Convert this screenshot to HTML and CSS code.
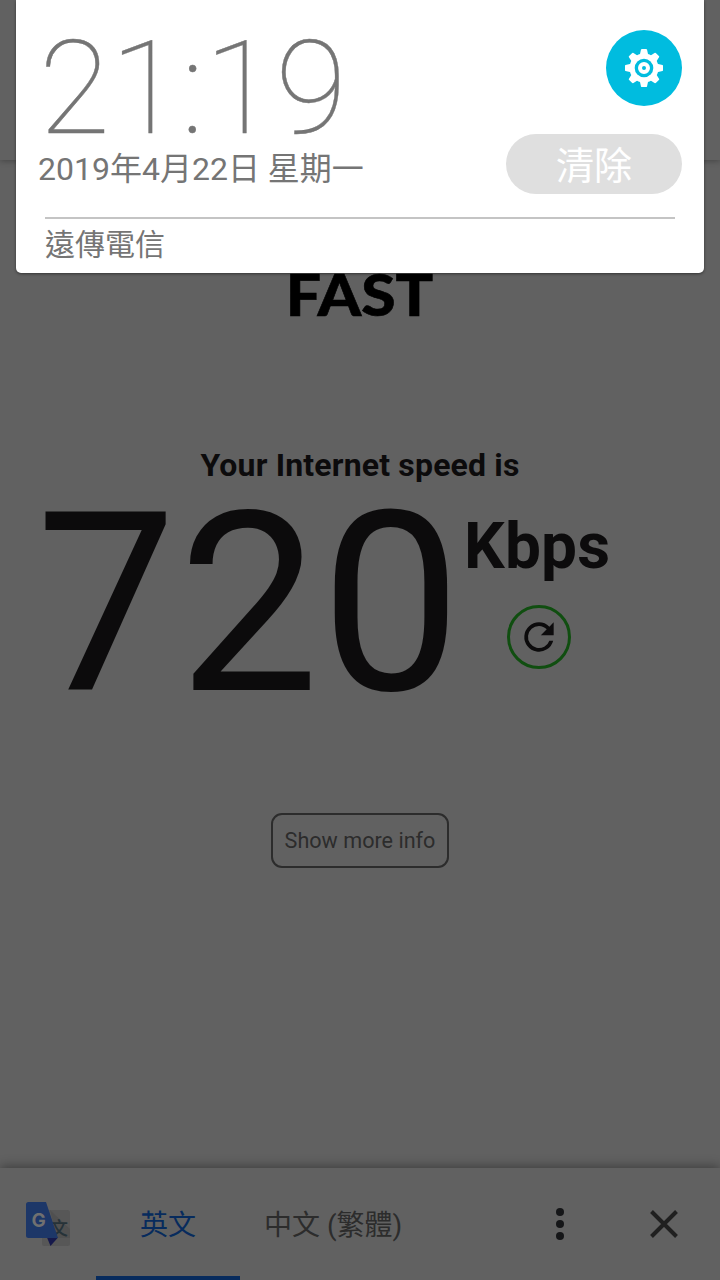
FILE: index.html
```html
<!DOCTYPE html>
<html lang="zh-Hant">
  <head>
    <meta charset="UTF-8" />
    <meta name="viewport" content="width=device-width, initial-scale=1.0" />
    <title>FAST</title>
    <link rel="stylesheet" href="styles.css">
  </head>
  <body>
    <div id="container">
      <header class="top-bar"></header>
      <main class="content">
        <h1 class="logo">FAST</h1>
        <p class="speed-title">Your Internet speed is</p>
        <div class="speed">
          <span class="speed-value">720</span>
          <div class="speed-side">
            <span class="speed-unit">Kbps</span>
            <button type="button" class="refresh-btn" aria-label="Refresh">
              <svg viewBox="0 0 24 24" width="44" height="44">
                <path d="M17.65 6.35A7.96 7.96 0 0 0 12 4a8 8 0 1 0 7.73 10h-2.08A6 6 0 1 1 12 6c1.66 0 3.14.69 4.22 1.78L13 11h7V4z" />
              </svg>
            </button>
          </div>
        </div>
        <button type="button" class="more-btn">Show more info</button>
      </main>
      <footer class="translate-bar">
        <svg class="translate-icon" viewBox="0 0 44 44" width="44" height="44">
          <rect x="16" y="8" width="28" height="36" rx="2.5" fill="#575757" />
          <path d="M24 8l7 28h13V27z" fill="#505050" />
          <text x="24" y="32.500" class="icon-wen">文</text>
          <path d="M21 35.500h11L24.500 44z" fill="#16194b" />
          <path d="M2.500 0H20l12 36H2.500A2.500 2.500 0 0 1 0 33.500v-31A2.500 2.500 0 0 1 2.500 0z" fill="#1d3768" />
          <text x="5.500" y="25" class="icon-g">G</text>
        </svg>
        <span class="tab active">英文</span>
        <span class="tab">中文 (繁體)</span>
        <svg class="menu-icon" viewBox="0 0 8 32" width="8" height="32">
          <circle cx="4" cy="4" r="4" />
          <circle cx="4" cy="16" r="4" />
          <circle cx="4" cy="28" r="4" />
        </svg>
        <svg class="close-icon" viewBox="0 0 28 28" width="28" height="28">
          <path d="M1.500 1.500l25 25M26.500 1.500l-25 25" />
        </svg>
      </footer>

      <!-- notification shade -->
      <section class="shade">
        <div class="shade-top">
          <div class="clock">
            <div class="time">21:19</div>
            <div class="date">2019年4月22日 星期一</div>
          </div>
          <div class="actions">
            <button type="button" class="settings-btn" aria-label="Settings">
              <svg viewBox="-20 -20 40 40" width="40" height="40">
                <g fill="#fff">
                  <circle r="14.500" />
                  <path id="tooth" d="M-4.200-13L-3-18.500Q-2.800-19-2-19H2Q2.800-19 3-18.500L4.200-13z" />
                  <use href="#tooth" transform="rotate(45)" />
                  <use href="#tooth" transform="rotate(90)" />
                  <use href="#tooth" transform="rotate(135)" />
                  <use href="#tooth" transform="rotate(180)" />
                  <use href="#tooth" transform="rotate(225)" />
                  <use href="#tooth" transform="rotate(270)" />
                  <use href="#tooth" transform="rotate(315)" />
                </g>
                <circle r="9.300" fill="#00bcdf" />
                <circle r="4" fill="none" stroke="#fff" stroke-width="4" />
              </svg>
            </button>
            <button type="button" class="clear-btn">清除</button>
          </div>
        </div>
        <p class="carrier">遠傳電信</p>
      </section>
    </div>
  </body>
</html>
```
FILE: styles.css
```css
* {
  box-sizing: border-box;
  margin: 0;
  padding: 0;
}
body {
  font-family: Roboto, "Noto Sans CJK TC", sans-serif;
  background-color: #616161;
  color: #0c0b0c;
}
button {
  font-family: inherit;
  background: none;
  border: none;
}
svg {
  display: block;
}
#container {
  position: relative;
  display: flex;
  flex-direction: column;
  width: 720px;
  height: 1280px;
  overflow: hidden;
}
.top-bar {
  height: 160px;
  flex-shrink: 0;
  box-shadow: 0 1px 6px rgba(0, 0, 0, 0.3);
}
.content {
  flex: 1;
  display: flex;
  flex-direction: column;
  align-items: center;
  padding-top: 104px;
}
.logo {
  font-family: Lato, sans-serif;
  font-size: 58px;
  font-weight: 900;
  line-height: 60px;
  color: #000;
  -webkit-text-stroke: 0.6px #000;
  transform: scaleX(1.075);
}
.speed-title {
  margin-top: 121px;
  font-size: 32px;
  font-weight: 700;
  line-height: 40px;
  letter-spacing: 0.17px;
}
.speed {
  align-self: stretch;
  display: flex;
  padding-left: 36px;
  margin-top: 20px;
}
.speed-value {
  width: 428px;
  font-size: 250px;
  line-height: 200px;
  letter-spacing: 1.9px;
}
.speed-side {
  display: flex;
  flex-direction: column;
  align-items: center;
  padding-top: 4px;
}
.speed-unit {
  font-size: 64px;
  font-weight: 700;
  line-height: 76px;
  letter-spacing: 0.2px;
}
.refresh-btn {
  display: flex;
  justify-content: center;
  align-items: center;
  width: 64px;
  height: 64px;
  margin: 20px 0 0 3px;
  border: 3px solid #104e10;
  border-radius: 50%;
  fill: #0c0b0c;
}
.more-btn {
  width: 178px;
  height: 55px;
  margin-top: 108px;
  font-size: 21.6px;
  color: #2c2c2c;
  border: 2px solid #2c2c2c;
  border-radius: 11px;
}

.translate-bar {
  display: flex;
  align-items: center;
  height: 112px;
  flex-shrink: 0;
  padding: 0 42px 0 26px;
  background-color: #616161;
  box-shadow: 0 -2px 10px rgba(0, 0, 0, 0.35);
}
.icon-g {
  font-family: Inter, sans-serif;
  font-size: 19px;
  font-weight: 700;
  fill: #707070;
}
.icon-wen {
  font-size: 18px;
  font-weight: 500;
  fill: #263238;
}
.tab {
  align-self: stretch;
  padding: 4px 24px 0;
  font-size: 28px;
  line-height: 107px;
  color: #2c2c2c;
}
.tab.active {
  width: 144px;
  margin-left: 26px;
  padding: 4px 0 0;
  text-align: center;
  color: #072b5d;
  border-bottom: 4px solid #072b5d;
}
.menu-icon {
  margin-left: auto;
  fill: #151618;
}
.close-icon {
  margin-left: 86px;
  stroke: #202020;
  stroke-width: 4;
}

.shade {
  position: absolute;
  top: 0;
  left: 16px;
  width: 688px;
  height: 273px;
  padding: 0 22px;
  background-color: #fff;
  border-radius: 0 0 5px 5px;
  box-shadow: 0 1px 3px rgba(0, 0, 0, 0.45);
  color: #757575;
}
.shade-top {
  display: flex;
  justify-content: space-between;
  height: 217px;
}
.clock {
  padding-top: 29px;
}
.time {
  padding-left: 1px;
  font-size: 130px;
  font-weight: 100;
  line-height: 119px;
  -webkit-text-stroke: 0.4px #757575;
}
.date {
  margin-top: 2px;
  font-size: 32px;
  line-height: 38px;
}
.actions {
  display: flex;
  flex-direction: column;
  align-items: flex-end;
  gap: 28px;
  padding-top: 30px;
}
.settings-btn {
  display: flex;
  justify-content: center;
  align-items: center;
  width: 76px;
  height: 76px;
  background-color: #00bcdf;
  border-radius: 50%;
}
.clear-btn {
  width: 176px;
  height: 60px;
  padding-top: 5px;
  font-size: 38px;
  line-height: 55px;
  color: #fff;
  background-color: #dfdfdf;
  border-radius: 30px;
}
.carrier {
  margin: 0 7px;
  padding-top: 7px;
  font-size: 30px;
  line-height: 38px;
  border-top: 2px solid #c4c4c4;
}
```
